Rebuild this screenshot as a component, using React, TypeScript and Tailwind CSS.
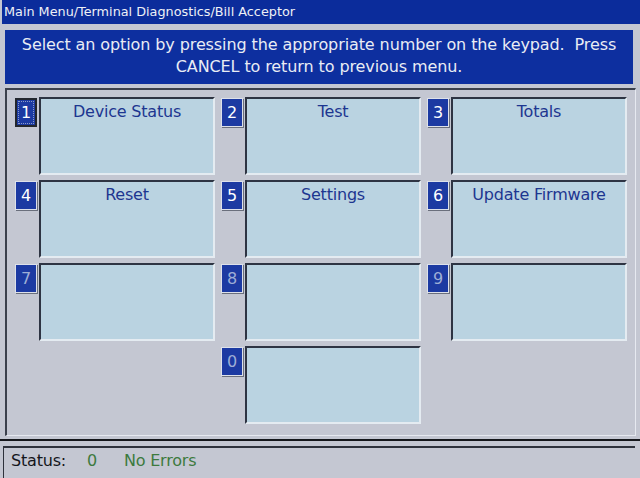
const options = [
  { key: "1", label: "Device Status", enabled: true, focused: true },
  { key: "2", label: "Test", enabled: true },
  { key: "3", label: "Totals", enabled: true },
  { key: "4", label: "Reset", enabled: true },
  { key: "5", label: "Settings", enabled: true },
  { key: "6", label: "Update Firmware", enabled: true },
  { key: "7", label: "", enabled: false },
  { key: "8", label: "", enabled: false },
  { key: "9", label: "", enabled: false },
];

function KeyButton({
  num,
  label,
  enabled,
  focused,
}: {
  num: string;
  label: string;
  enabled: boolean;
  focused?: boolean;
}) {
  return (
    <div className="flex gap-[2px]">
      <div
        className={
          focused
            ? "mt-[1px] flex h-[29px] w-[22px] items-center justify-center border-2 border-[#23262e] bg-[#1c3aa2] outline outline-1 -outline-offset-4 outline-dotted outline-[#8d9bc8]"
            : "mt-[1px] flex h-[29px] w-[22px] items-center justify-center border border-[#dde1ea] bg-[#1c3aa2] shadow-[1px_1px_0_#6a6f7c]"
        }
      >
        <span className={enabled ? "text-[16px] text-white" : "text-[16px] text-[#9eaed6]"}>{num}</span>
      </div>
      <div className="h-[78px] w-[176px] border-2 border-l-[#2e3443] border-t-[#2e3443] border-b-[#e4ebf1] border-r-[#e4ebf1] bg-[#bad3e1] pt-[1px] text-center text-[16px] tracking-[-0.2px] text-[#1d3690]">
        {label}
      </div>
    </div>
  );
}

export default function App() {
  return (
    <div
      className="flex h-[478px] w-[640px] flex-col overflow-hidden bg-[#c4c7d2]"
      style={{ fontFamily: '"DejaVu Sans", "Liberation Sans", sans-serif' }}
    >
      <div className="ml-[2px] flex h-[24px] items-center bg-[#0b2c9b] pl-[2px] text-[12.8px] text-[#eef0f6]">
        Main Menu/Terminal Diagnostics/Bill Acceptor
      </div>

      <div className="ml-[5px] mr-[7px] mt-[6px] flex h-[54px] flex-col items-center justify-center bg-[#0d2f9f] pb-[2px] text-[16px] leading-[22px] tracking-[-0.1px] text-[#e9ecf4]">
        <p>Select an option by pressing the appropriate number on the keypad.&nbsp; Press</p>
        <p>CANCEL to return to previous menu.</p>
      </div>

      <div className="ml-[5px] mr-[4px] mt-[4px] h-[348px] border-l-2 border-t-2 border-b border-r border-l-[#3b404c] border-t-[#3b404c] border-b-[#e6e9f0] border-r-[#e6e9f0] pl-[8px] pt-[7px]">
        <div className="grid grid-cols-[200px_200px_200px] gap-x-[6px] gap-y-[5px]">
          {options.map((o) => (
            <KeyButton key={o.key} num={o.key} label={o.label} enabled={o.enabled} focused={o.focused} />
          ))}
          <div />
          <KeyButton num="0" label="" enabled={false} />
        </div>
      </div>

      <div className="mt-[3px] h-[2px] bg-[#15171c]" />
      <div className="ml-[3px] mr-[5px] mt-[5px] flex flex-1 items-start gap-[21px] border-l border-t-2 border-l-[#2e323c] border-t-[#2e323c] pl-[7px] pt-[1px] text-[16px] tracking-[-0.2px]">
        <span className="text-[#14161c]">Status:</span>
        <span className="text-[#3d7a3e]">0</span>
        <span className="ml-[6px] text-[#3d7a3e]">No Errors</span>
      </div>
    </div>
  );
}
